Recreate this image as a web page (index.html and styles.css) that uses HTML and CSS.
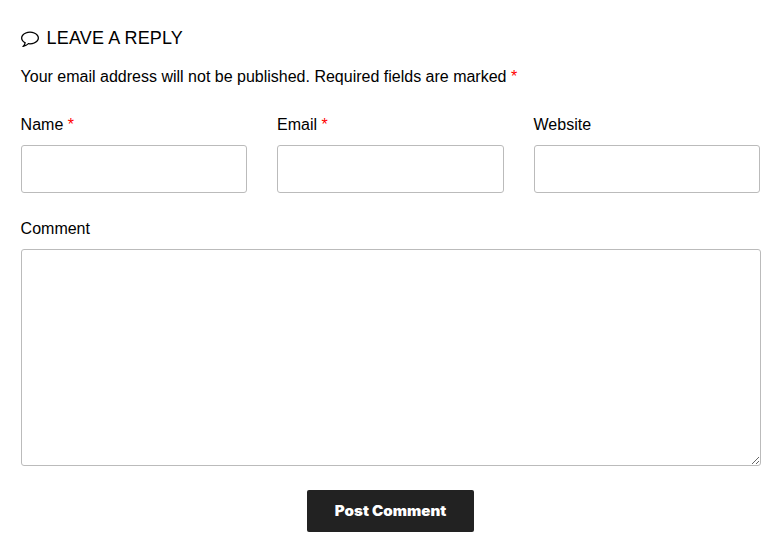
FILE: index.html
```html
<!DOCTYPE html>
<html lang="en">
<head>
<meta charset="utf-8">
<title>Leave a Reply</title>
<link rel="stylesheet" href="styles.css">
</head>
<body>
<section class="respond">
  <h3 class="title">
    <svg class="bubble" viewBox="0 0 1792 1792" aria-hidden="true"><path d="M896 384q-204 0-381.500 69.500T232.500 641 128 896q0 112 71.500 213.500T401 1285l87 50-27 96q-24 91-70 172 152-63 275-171l43-38 57 6q69 8 130 8 204 0 381.500-69.500t282-187.500T1664 896t-104.500-255-282-187.500T896 384zm896 512q0 174-120 321.500t-326 233-450 85.500q-70 0-145-8-198 175-460 242-49 14-114 22h-5q-15 0-27-10.500t-16-27.500v-1q-3-4-.5-12t2-10 4.500-9.500l6-9 7-8.500 8-9q7-8 31-34.500t34.500-38 31-39.500 32.500-51 27-59 26-76q-157-89-247.500-220T0 896q0-174 120-321.500t326-233T896 256t450 85.500 326 233T1792 896z"/></svg>
    <span>LEAVE A REPLY</span>
  </h3>
  <p class="notes">Your email address will not be published. Required fields are marked <span class="required">*</span></p>
  <form>
    <div class="fields">
      <div class="field"><label for="author">Name <span class="required">*</span></label><input id="author" type="text"></div>
      <div class="field"><label for="email">Email <span class="required">*</span></label><input id="email" type="text"></div>
      <div class="field"><label for="url">Website</label><input id="url" type="text"></div>
    </div>
    <div class="field comment"><label for="comment">Comment</label><textarea id="comment"></textarea></div>
    <button class="submit" type="button"><span class="submit-label">Post Comment</span></button>
  </form>
</section>
</body>
</html>
```
FILE: styles.css
```css
* { box-sizing: border-box; }
body {
  margin: 0;
  background: #fff;
  color: #000;
  font: 16px/24px "Liberation Sans", Arial, sans-serif;
}
.respond { width: 760.6px; padding: 26px 0 0 20.6px; }
.title {
  display: flex;
  align-items: center;
  gap: 8px;
  margin: 0 0 15px;
  font-size: 18px;
  font-weight: 400;
  line-height: 24px;
  letter-spacing: 0.15px;
}
.bubble { width: 18px; height: 18px; }
.notes { margin: 0 0 24px; }
.required { color: #f00; }
.fields {
  display: grid;
  grid-template-columns: repeat(3, 1fr);
  gap: 30px;
  width: 739.4px;
  margin-bottom: 24px;
}
.field { display: flex; flex-direction: column; }
.field label { margin-bottom: 8px; }
input, textarea {
  display: block;
  width: 100%;
  min-width: 0;
  margin: 0;
  border: 1px solid #bbb;
  border-radius: 3px;
  background: #fff;
  font: inherit;
}
input { height: 48px; }
textarea { height: 217px; }
.submit {
  display: block;
  width: 167px;
  height: 42px;
  margin: 24px auto 0;
  padding: 0;
  border: 0;
  border-radius: 2px;
  background: #222;
  color: #fff;
  font: 900 14px/20px Inter, sans-serif;
}
.submit-label {
  display: inline-block;
  transform: scaleX(1.08);
}
```
